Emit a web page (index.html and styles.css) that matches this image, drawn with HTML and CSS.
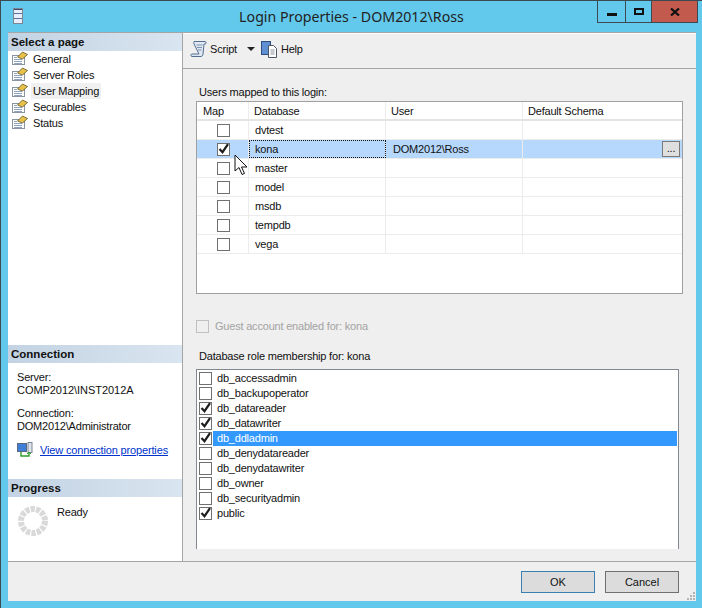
FILE: index.html
```html
<!DOCTYPE html>
<html lang="en">
<head>
  <meta charset="UTF-8">
  <title>Login Properties - DOM2012\Ross</title>
  <link rel="stylesheet" href="styles.css">
</head>
<body>
  <svg width="0" height="0" class="defs">
    <symbol id="page" viewBox="0 0 16 16">
      <rect x="0.5" y="4.5" width="12" height="9" fill="#fff" stroke="#8a94a3"/>
      <path d="M2 6.500h3M2 8.500h8M2 10.500h8M2 12.500h8" stroke="#8fa3bd"/>
      <path d="M5.500 6l5-5 5 2.500-5 4.500z" fill="#e8c24a" stroke="#5d5220" stroke-width="0.8"/>
    </symbol>
    <symbol id="check" viewBox="0 0 13 13">
      <path d="M2.500 6l3 3.200 5.500-8" fill="none" stroke="#1d1d1d" stroke-width="2.200"/>
    </symbol>
  </svg>

  <div class="window">
    <div class="titlebar">
      <svg class="app-icon" width="10" height="16" viewBox="0 0 10 16">
        <rect x="0.5" y="0.5" width="9" height="15" fill="#e8eefc" stroke="#7d8595"/>
        <path d="M1 1.500h8" stroke="#3c4a6a"/>
        <path d="M1 5.500h8M1 10.500h8" stroke="#5d6f9f"/>
      </svg>
      <div class="title">Login Properties - DOM2012\Ross</div>
      <div class="controls">
        <div class="ctl ctl-min"><span class="min-glyph"></span></div>
        <div class="ctl ctl-max"><span class="max-glyph"></span></div>
        <div class="ctl ctl-close">
          <svg width="10" height="8" viewBox="0 0 10 8"><path d="M1 0.500l8 7M9 0.500l-8 7" stroke="#111" stroke-width="2.200"/></svg>
        </div>
      </div>
    </div>

    <div class="client">
      <div class="main">
        <!-- Left navigation -->
        <div class="sidebar">
          <div class="side-head">Select a page</div>
          <div class="page-list">
            <div class="page-item"><svg width="16" height="16"><use href="#page"/></svg><span>General</span></div>
            <div class="page-item"><svg width="16" height="16"><use href="#page"/></svg><span>Server Roles</span></div>
            <div class="page-item"><svg width="16" height="16"><use href="#page"/></svg><span class="current">User Mapping</span></div>
            <div class="page-item"><svg width="16" height="16"><use href="#page"/></svg><span>Securables</span></div>
            <div class="page-item"><svg width="16" height="16"><use href="#page"/></svg><span>Status</span></div>
          </div>

          <div class="side-head">Connection</div>
          <div class="conn">
            <div>Server:</div>
            <div class="conn-server">COMP2012\INST2012A</div>
            <div class="conn-gap">Connection:</div>
            <div>DOM2012\Administrator</div>
            <div class="conn-link">
              <svg width="16" height="16" viewBox="0 0 16 16">
                <rect x="0.5" y="1.500" width="9" height="8" fill="#3f7fd8" stroke="#5a6a80"/>
                <rect x="11" y="0.500" width="4" height="10" fill="#dfe5ee" stroke="#7d8595"/>
                <path d="M4 10v4h8v-3" fill="none" stroke="#2f9a2f" stroke-width="1.400"/>
                <path d="M10 12l2-2 2 2" fill="none" stroke="#2f9a2f"/>
              </svg>
              <a href="#">View connection properties</a>
            </div>
          </div>

          <div class="side-head">Progress</div>
          <div class="progress">
            <svg width="30" height="30" viewBox="0 0 30 30">
              <circle cx="15" cy="15" r="12" fill="none" stroke="#d9d9d9" stroke-width="6" stroke-dasharray="4.200 1.185"/>
            </svg>
            <span>Ready</span>
          </div>
        </div>

        <!-- Right content -->
        <div class="content">
          <div class="toolbar">
            <div class="tool">
              <svg width="17" height="16" viewBox="0 0 17 16">
                <path d="M4 .500h11c1.500 0 1.500 2.500 0 2.500h-1l-1 10c0 1.500-1 2.500-2 2.500H2c-1.500 0-1.500-2.500 0-2.500h7L4 3c-.5-1 0-2.500 0-2.500z" fill="#dfe7f3" stroke="#55708f"/>
                <path d="M6.500 4h6M7 6.500h5M8 9h3.500" stroke="#7d93b0"/>
              </svg>
              <span>Script</span>
            </div>
            <div class="tool-caret"></div>
            <div class="tool">
              <svg width="17" height="17" viewBox="0 0 17 17">
                <rect x="0.5" y="0.500" width="9" height="13" fill="#5f8fd0" stroke="#2f4f80"/>
                <path d="M7.500 4.500h5l3 3v9h-8z" fill="#fff" stroke="#4a5566"/>
                <path d="M9.500 9h4M9.500 11h4M9.500 13h4" stroke="#8a94a3"/>
              </svg>
              <span>Help</span>
            </div>
          </div>

          <div class="form">
            <div class="label">Users mapped to this login:</div>
            <div class="grid-box">
              <div class="row grid-head">
                <div class="cell c-map">Map</div>
                <div class="cell c-db">Database</div>
                <div class="cell c-user">User</div>
                <div class="cell c-schema">Default Schema</div>
              </div>
              <div class="row">
                <div class="cell c-map"><span class="box"></span></div>
                <div class="cell c-db">dvtest</div>
                <div class="cell c-user"></div>
                <div class="cell c-schema"></div>
              </div>
              <div class="row row-sel">
                <div class="cell c-map"><span class="box"><svg width="13" height="13"><use href="#check"/></svg></span></div>
                <div class="cell c-db cell-focus">kona</div>
                <div class="cell c-user">DOM2012\Ross</div>
                <div class="cell c-schema"><span class="dots">...</span></div>
              </div>
              <div class="row">
                <div class="cell c-map"><span class="box"></span></div>
                <div class="cell c-db">master</div>
                <div class="cell c-user"></div>
                <div class="cell c-schema"></div>
              </div>
              <div class="row">
                <div class="cell c-map"><span class="box"></span></div>
                <div class="cell c-db">model</div>
                <div class="cell c-user"></div>
                <div class="cell c-schema"></div>
              </div>
              <div class="row">
                <div class="cell c-map"><span class="box"></span></div>
                <div class="cell c-db">msdb</div>
                <div class="cell c-user"></div>
                <div class="cell c-schema"></div>
              </div>
              <div class="row">
                <div class="cell c-map"><span class="box"></span></div>
                <div class="cell c-db">tempdb</div>
                <div class="cell c-user"></div>
                <div class="cell c-schema"></div>
              </div>
              <div class="row">
                <div class="cell c-map"><span class="box"></span></div>
                <div class="cell c-db">vega</div>
                <div class="cell c-user"></div>
                <div class="cell c-schema"></div>
              </div>
              <svg class="cursor" width="14" height="22" viewBox="0 0 14 22">
                <path d="M1 1v16l4-3.500 3 7 2.500-1-3-6.500h5.500z" fill="#fff" stroke="#111"/>
              </svg>
            </div>

            <div class="guest"><span class="box box-off"></span>Guest account enabled for: kona</div>

            <div class="label label-roles">Database role membership for: kona</div>
            <div class="role-box">
              <div class="role"><span class="box"></span><span class="role-name">db_accessadmin</span></div>
              <div class="role"><span class="box"></span><span class="role-name">db_backupoperator</span></div>
              <div class="role"><span class="box"><svg width="13" height="13"><use href="#check"/></svg></span><span class="role-name">db_datareader</span></div>
              <div class="role"><span class="box"><svg width="13" height="13"><use href="#check"/></svg></span><span class="role-name">db_datawriter</span></div>
              <div class="role role-sel"><span class="box"><svg width="13" height="13"><use href="#check"/></svg></span><span class="role-name">db_ddladmin</span></div>
              <div class="role"><span class="box"></span><span class="role-name">db_denydatareader</span></div>
              <div class="role"><span class="box"></span><span class="role-name">db_denydatawriter</span></div>
              <div class="role"><span class="box"></span><span class="role-name">db_owner</span></div>
              <div class="role"><span class="box"></span><span class="role-name">db_securityadmin</span></div>
              <div class="role"><span class="box"><svg width="13" height="13"><use href="#check"/></svg></span><span class="role-name">public</span></div>
            </div>
          </div>
        </div>
      </div>

      <div class="footer">
        <button class="btn btn-ok">OK</button>
        <button class="btn">Cancel</button>
        <svg class="grip" width="9" height="8" viewBox="0 0 9 8">
          <path d="M7 0h2v2H7zM4 3h2v2H4zM7 3h2v2H7zM1 6h2v2H1zM4 6h2v2H4zM7 6h2v2H7z" fill="#b5b5b5"/>
        </svg>
      </div>
    </div>
  </div>
</body>
</html>
```

FILE: styles.css
```css
html, body {
  margin: 0;
  padding: 0;
}

body {
  width: 702px;
  height: 608px;
  overflow: hidden;
  font-family: "Liberation Sans", Arial, sans-serif;
  font-size: 11px;
  letter-spacing: -0.2px;
  color: #111;
}

.defs {
  display: block;
  height: 0;
}

/* Window frame */
.window {
  box-sizing: border-box;
  width: 702px;
  height: 608px;
  background: #63c9ec;
  border-top: 1px solid #3c4a54;
  border-left: 1px solid #3c4a54;
  display: flex;
  flex-direction: column;
}

.titlebar {
  height: 31px;
  display: flex;
  align-items: flex-start;
  position: relative;
  flex-shrink: 0;
}

.app-icon {
  margin: 7px 0 0 12px;
}

.title {
  position: absolute;
  left: 0;
  right: 0;
  top: 6px;
  text-align: center;
  font-family: "Noto Sans", sans-serif;
  font-size: 14.2px;
  letter-spacing: 0;
  color: #222;
}

.controls {
  position: absolute;
  right: 4px;
  top: 0;
  height: 22px;
  display: flex;
  border: 1px solid #3c4a54;
  border-top: 0;
  box-sizing: border-box;
}

.ctl {
  display: flex;
  align-items: center;
  justify-content: center;
}

.ctl-min {
  width: 27px;
  border-right: 1px solid #3c4a54;
}

.ctl-max {
  width: 25px;
  border-right: 1px solid #3c4a54;
}

.ctl-close {
  width: 45px;
  background: #c25a4e;
}

.min-glyph {
  width: 10px;
  height: 3px;
  margin-top: 5px;
  background: #111;
}

.max-glyph {
  box-sizing: border-box;
  width: 10px;
  height: 7px;
  border: 2px solid #111;
}

.client {
  margin: 0 6px 7px 7px;
  flex: 1;
  min-height: 0;
  background: #efefef;
  border-top: 1px solid #a5a5a5;
  display: flex;
  flex-direction: column;
}

.main {
  flex: 1;
  min-height: 0;
  display: flex;
  border-bottom: 1px solid #a5a5a5;
}

/* Sidebar */
.sidebar {
  width: 174px;
  background: #fff;
  border-right: 1px solid #a5a5a5;
  display: flex;
  flex-direction: column;
  flex-shrink: 0;
}

.side-head {
  height: 18px;
  line-height: 18px;
  padding-left: 3px;
  font-size: 11.5px;
  font-weight: bold;
  letter-spacing: 0;
  background: linear-gradient(to right, #c3d3e3, #d9e5f0);
}

.page-list {
  height: 294px;
}

.page-item {
  height: 16px;
  display: flex;
  align-items: center;
  padding-left: 4px;
}

.page-item span {
  margin-left: 3px;
  padding: 0 2px;
  line-height: 16px;
}

.page-item .current {
  background: #f0f0f0;
}

.conn {
  padding: 8px 0 0 9px;
  height: 116px;
  box-sizing: border-box;
  line-height: 13px;
}

.conn-server {
  letter-spacing: -0.05px;
}

.conn-gap {
  margin-top: 10px;
}

.conn-link {
  display: flex;
  align-items: center;
  gap: 7px;
  margin-top: 9px;
  white-space: nowrap;
}

.conn-link a {
  color: #0033cc;
  letter-spacing: -0.15px;
}

.progress {
  display: flex;
  align-items: flex-start;
  padding: 9px 0 0 10px;
  gap: 9px;
  line-height: 13px;
}

/* Right panel */
.content {
  flex: 1;
  min-width: 0;
  display: flex;
  flex-direction: column;
}

.toolbar {
  height: 36px;
  border-top: 1px solid #fff;
  border-bottom: 1px solid #a5a5a5;
  display: flex;
  align-items: center;
  padding: 0 0 4px 7px;
  box-sizing: border-box;
}

.tool {
  display: flex;
  align-items: center;
  gap: 3px;
}

.tool-caret {
  width: 0;
  height: 0;
  margin: 0 6px 0 10px;
  border-left: 4px solid transparent;
  border-right: 4px solid transparent;
  border-top: 4px solid #222;
}

.form {
  padding: 16px 13px 0 13px;
  flex: 1;
  min-height: 0;
}

.label {
  line-height: 14px;
  margin: 0 0 2px 3px;
}

.grid-box {
  position: relative;
  height: 193px;
  box-sizing: border-box;
  background: #fff;
  border: 1px solid #a0a0a0;
}

.row {
  display: flex;
  height: 19px;
  box-sizing: border-box;
  border-bottom: 1px solid #ececec;
}

.grid-head {
  height: 19px;
  border-bottom: 2px solid #e4e4e4;
}

.cell {
  box-sizing: border-box;
  padding-left: 6px;
  line-height: 18px;
  border-right: 1px solid #ececec;
  position: relative;
  flex-shrink: 0;
}

.grid-head .c-db,
.grid-head .c-user,
.grid-head .c-schema {
  padding-left: 5px;
}

.c-map {
  width: 52px;
}

.row:not(.grid-head) .c-map {
  display: flex;
  align-items: center;
  justify-content: center;
  padding: 0 0 0 1px;
}

.c-db {
  width: 137px;
}

.c-user {
  width: 137px;
  padding-left: 7px;
}

.c-schema {
  width: 158px;
  border-right: 0;
}

.row-sel {
  background: #b6d8fd;
}

.cell-focus {
  outline: 1px dotted #111;
  outline-offset: -1px;
}

.dots {
  position: absolute;
  right: 1px;
  top: 1px;
  box-sizing: border-box;
  width: 18px;
  height: 16px;
  line-height: 12px;
  text-align: center;
  background: #dfdfdf;
  border: 1px solid #7a7a7a;
}

.box {
  box-sizing: border-box;
  display: inline-block;
  width: 13px;
  height: 13px;
  background: #fff;
  border: 1px solid #707070;
  flex-shrink: 0;
  position: relative;
}

.box svg {
  position: absolute;
  left: -1px;
  top: -1px;
}

.cursor {
  position: absolute;
  left: 37px;
  top: 52px;
}

.guest {
  display: flex;
  align-items: center;
  gap: 6px;
  margin-top: 26px;
  color: #a3a3a3;
  line-height: 13px;
}

.box-off {
  background: transparent;
  border-color: #c0c0c0;
}

.label-roles {
  margin-top: 16px;
  margin-bottom: 6px;
}

.role-box {
  height: 180px;
  margin-right: 4px;
  box-sizing: border-box;
  background: #fff;
  border: 1px solid #828790;
  border-bottom: 0;
  padding: 1px 0 0 2px;
}

.role {
  display: flex;
  align-items: center;
  height: 15px;
}

.role .box {
  margin-right: 1px;
}

.role-name {
  flex: 1;
  padding-left: 4px;
  line-height: 15px;
}

.role-sel .role-name {
  background: #3399ff;
  color: #fff;
  margin-right: 1px;
}

/* Bottom buttons */
.footer {
  height: 39px;
  flex-shrink: 0;
  position: relative;
  display: flex;
  justify-content: flex-end;
  gap: 10px;
  padding: 9px 17px 0 0;
  box-sizing: border-box;
}

.btn {
  width: 74px;
  height: 22px;
  padding: 0;
  font: inherit;
  letter-spacing: 0;
  color: #111;
  background: #dcdcdc;
  border: 1px solid #707070;
}

.btn-ok {
  border-color: #3c7fb1;
}

.grip {
  position: absolute;
  right: 1px;
  bottom: 1px;
}
```
